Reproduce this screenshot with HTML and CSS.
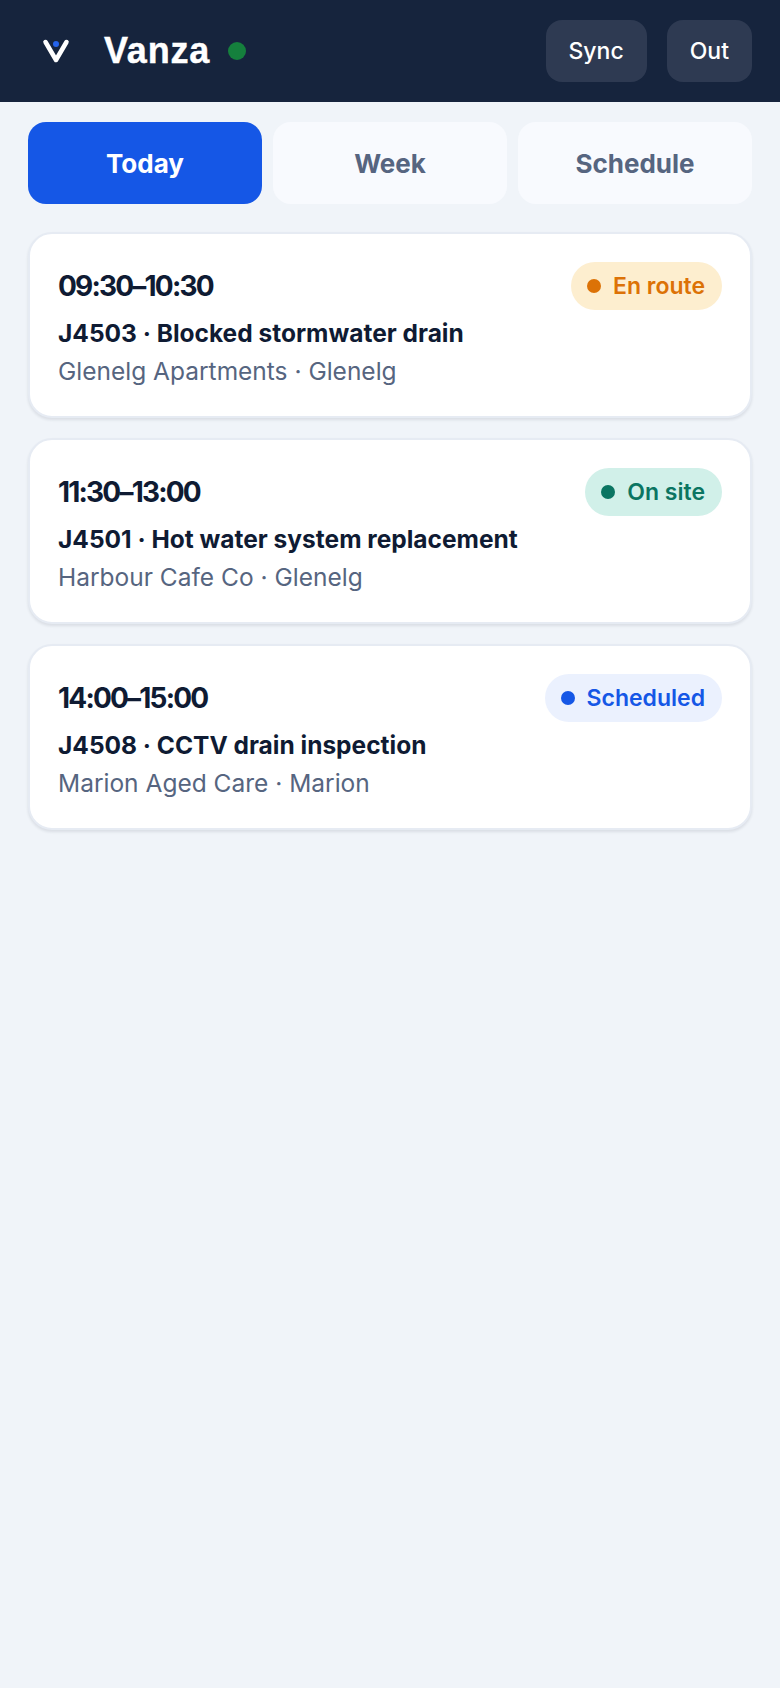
FILE: index.html
```html
<!DOCTYPE html>
<html lang="en">
<head>
    <meta charset="UTF-8">
    <meta name="viewport" content="width=device-width, initial-scale=1.0">
    <title>Vanza</title>
    <link rel="stylesheet" href="styles.css">
</head>
<body>
    <header class="topbar">
        <div class="brand">
            <svg class="logo" width="28" height="26" viewBox="0 0 28 26">
                <path d="M3.5 4 L14 22 L24.5 4" fill="none" stroke="#fff" stroke-width="4.5" stroke-linecap="round" stroke-linejoin="round"/>
                <circle cx="14" cy="6" r="3" fill="#2563eb"/>
            </svg>
            <span class="brand-name">Vanza</span>
            <span class="online-dot"></span>
        </div>
        <div class="top-actions">
            <button class="top-btn">Sync</button>
            <button class="top-btn">Out</button>
        </div>
    </header>

    <nav class="tabs">
        <button class="tab active">Today</button>
        <button class="tab">Week</button>
        <button class="tab">Schedule</button>
    </nav>

    <main class="jobs">
        <article class="card">
            <div class="card-top">
                <span class="time">09:30–10:30</span>
                <span class="badge enroute"><i class="dot"></i>En route</span>
            </div>
            <div class="job-title">J4503 · Blocked stormwater drain</div>
            <div class="job-place">Glenelg Apartments · Glenelg</div>
        </article>
        <article class="card">
            <div class="card-top">
                <span class="time">11:30–13:00</span>
                <span class="badge onsite"><i class="dot"></i>On site</span>
            </div>
            <div class="job-title">J4501 · Hot water system replacement</div>
            <div class="job-place">Harbour Cafe Co · Glenelg</div>
        </article>
        <article class="card">
            <div class="card-top">
                <span class="time">14:00–15:00</span>
                <span class="badge scheduled"><i class="dot"></i>Scheduled</span>
            </div>
            <div class="job-title">J4508 · CCTV drain inspection</div>
            <div class="job-place">Marion Aged Care · Marion</div>
        </article>
    </main>
</body>
</html>
```

FILE: styles.css
```css
* {
    box-sizing: border-box;
}
body {
    margin: 0;
    min-height: 100vh;
    background-color: #f0f4f9;
    font-family: 'Inter', 'Noto Sans', sans-serif;
    color: #0f1b33;
}
button {
    font-family: inherit;
    border: none;
    cursor: pointer;
}
.topbar {
    height: 102px;
    padding: 20px 28px 20px 42px;
    background-color: #16243d;
    display: flex;
    align-items: center;
    justify-content: space-between;
}
.brand {
    display: flex;
    align-items: center;
}
.logo {
    display: block;
}
.brand-name {
    margin-left: 34px;
    font-family: 'Liberation Sans', sans-serif;
    font-size: 36px;
    font-weight: 700;
    letter-spacing: 0.8px;
    color: #fff;
    -webkit-text-stroke: 0.4px #fff;
}
.online-dot {
    width: 18px;
    height: 18px;
    margin-left: 18px;
    border-radius: 50%;
    background-color: #15803d;
}
.top-actions {
    display: flex;
    gap: 20px;
}
.top-btn {
    height: 62px;
    padding: 0 23px;
    border-radius: 16px;
    background-color: #2e3a52;
    color: #fff;
    font-size: 23px;
    font-weight: 500;
}
.tabs {
    display: flex;
    gap: 11px;
    padding: 20px 28px 0;
}
.tab {
    flex: 1;
    height: 82px;
    border-radius: 18px;
    background-color: #f8fafe;
    color: #566580;
    font-size: 26px;
    font-weight: 700;
}
.tab.active {
    background-color: #1557e6;
    color: #fff;
}
.jobs {
    display: flex;
    flex-direction: column;
    gap: 20px;
    padding: 28px 28px 0;
}
.card {
    height: 186px;
    padding: 28px 28px 0;
    background-color: #fff;
    border: 2px solid #e6ebf3;
    border-radius: 24px;
    box-shadow: 0 2px 3px rgba(15, 27, 51, 0.1);
}
.card-top {
    display: flex;
    align-items: center;
    justify-content: space-between;
    height: 48px;
}
.time {
    font-size: 28px;
    font-weight: 700;
    letter-spacing: -1.8px;
}
.badge {
    display: flex;
    align-items: center;
    height: 48px;
    padding: 0 17px 0 16px;
    border-radius: 24px;
    font-size: 23px;
    font-weight: 600;
}
.dot {
    width: 14px;
    height: 14px;
    margin-right: 12px;
    border-radius: 50%;
    background-color: currentColor;
}
.enroute {
    background-color: #fdeecf;
    color: #dc7206;
}
.onsite {
    background-color: #d1f0e9;
    color: #0b7562;
}
.scheduled {
    background-color: #ebf1fe;
    color: #1557e6;
}
.job-title {
    margin-top: 7px;
    font-size: 24.5px;
    font-weight: 700;
    line-height: 32px;
}
.job-place {
    margin-top: 6px;
    font-size: 24.5px;
    line-height: 32px;
    color: #566580;
}
```
